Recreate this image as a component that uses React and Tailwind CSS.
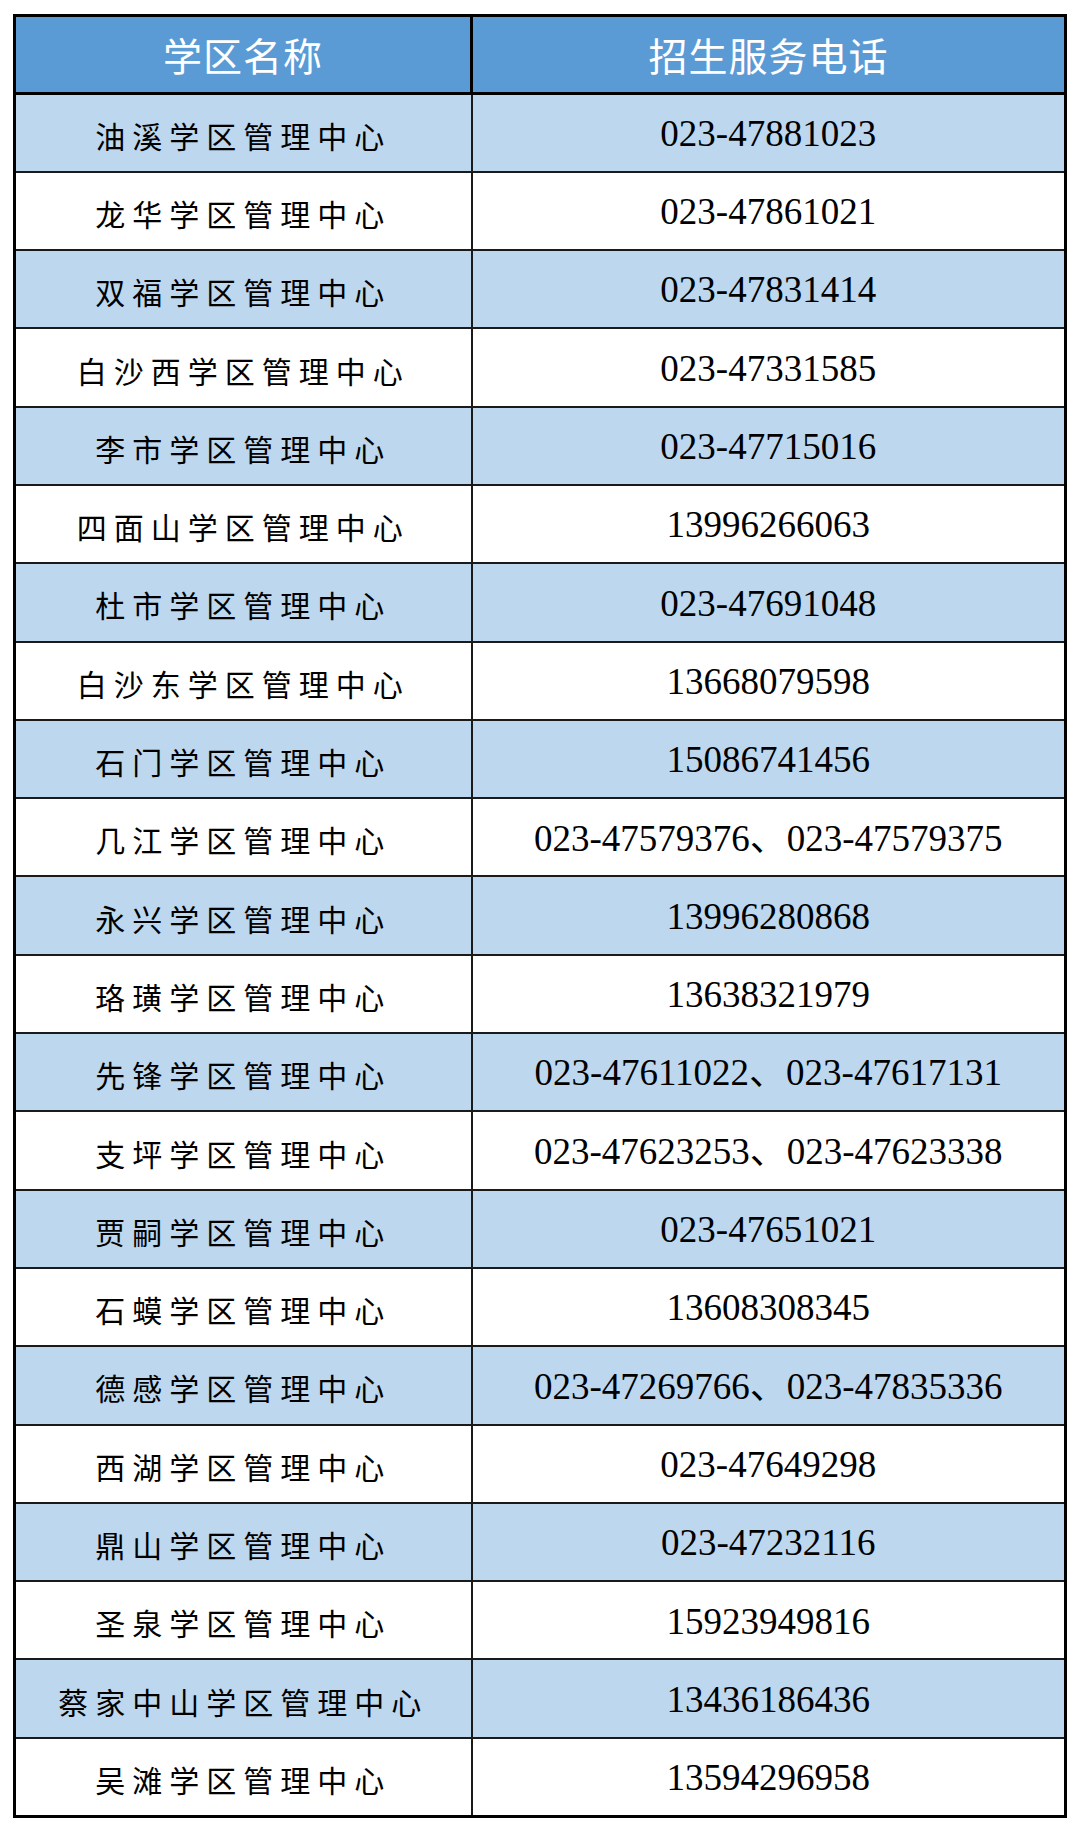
const rows = [
  ["油溪学区管理中心", "023-47881023"],
  ["龙华学区管理中心", "023-47861021"],
  ["双福学区管理中心", "023-47831414"],
  ["白沙西学区管理中心", "023-47331585"],
  ["李市学区管理中心", "023-47715016"],
  ["四面山学区管理中心", "13996266063"],
  ["杜市学区管理中心", "023-47691048"],
  ["白沙东学区管理中心", "13668079598"],
  ["石门学区管理中心", "15086741456"],
  ["几江学区管理中心", "023-47579376、023-47579375"],
  ["永兴学区管理中心", "13996280868"],
  ["珞璜学区管理中心", "13638321979"],
  ["先锋学区管理中心", "023-47611022、023-47617131"],
  ["支坪学区管理中心", "023-47623253、023-47623338"],
  ["贾嗣学区管理中心", "023-47651021"],
  ["石蟆学区管理中心", "13608308345"],
  ["德感学区管理中心", "023-47269766、023-47835336"],
  ["西湖学区管理中心", "023-47649298"],
  ["鼎山学区管理中心", "023-47232116"],
  ["圣泉学区管理中心", "15923949816"],
  ["蔡家中山学区管理中心", "13436186436"],
  ["吴滩学区管理中心", "13594296958"],
];

export default function App() {
  return (
    <div className="w-[1080px] h-[1832px] bg-white pt-[14px] pl-[13px]">
      <table className="w-[1054px] border-collapse border-[3px] border-black table-fixed">
        <colgroup>
          <col className="w-[457px]" />
          <col />
        </colgroup>
        <thead>
          <tr className="h-[78px] bg-[#5b9bd5]">
            <th className="border-[3px] border-black text-white font-normal text-[39px] tracking-[1px] text-center align-middle p-0 [font-family:'Noto_Sans_CJK_SC',sans-serif]">
              学区名称
            </th>
            <th className="border-[3px] border-black text-white font-normal text-[39px] tracking-[1px] text-center align-middle p-0 [font-family:'Noto_Sans_CJK_SC',sans-serif]">
              招生服务电话
            </th>
          </tr>
        </thead>
        <tbody>
          {rows.map(([name, phone], i) => (
            <tr
              key={i}
              className={i % 2 === 0 ? "h-[78.3px] bg-[#bdd7ee]" : "h-[78.3px] bg-white"}
            >
              <td className="border-2 border-[#1a1a1a] text-black text-[30px] tracking-[7px] text-center align-middle p-0 pt-[5px] [font-family:'Noto_Sans_CJK_SC',sans-serif]">
                {name}
              </td>
              <td className="border-2 border-[#1a1a1a] text-black text-[37px] text-center align-middle p-0 pt-[2px] [font-family:'Liberation_Serif','Noto_Sans_CJK_SC',serif]">
                {phone}
              </td>
            </tr>
          ))}
        </tbody>
      </table>
    </div>
  );
}
